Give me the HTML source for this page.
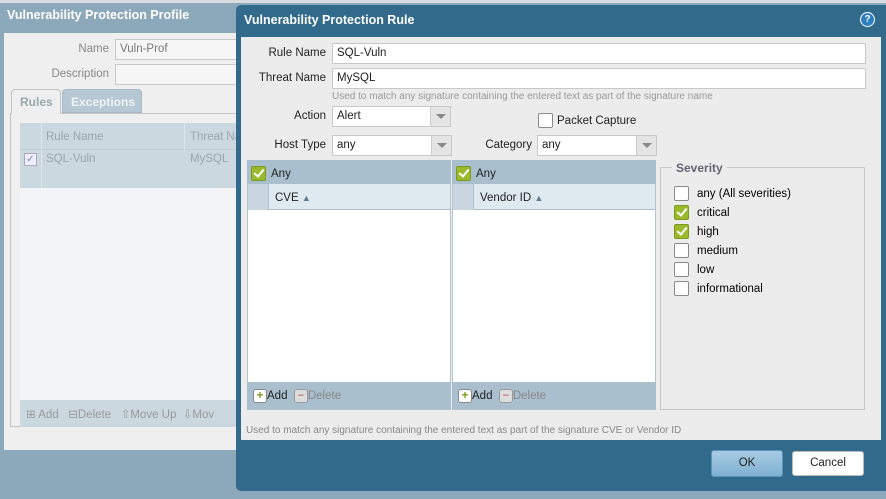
<!DOCTYPE html><html><head><style>
*{box-sizing:border-box;margin:0;padding:0}
body{width:886px;height:499px;overflow:hidden;background:#8ca8bb;font-family:"Liberation Sans","DejaVu Sans",sans-serif;font-size:11.5px;position:relative}
.a{position:absolute}
.inp{position:absolute;background:#fff;border:1px solid #c8c8c8;height:21px;padding:3px 4px;color:#222;font-size:11.5px}
.lbl{position:absolute;text-align:right;color:#222}
.cb{position:absolute;width:15px;height:15px;border:1px solid #8a8a8a;background:#fff;border-radius:2px}
.ck{background:#9ab92d;border-color:#7c9a1e}
.ck:after{content:"";position:absolute;left:4px;top:0px;width:4px;height:8px;border:solid #fff;border-width:0 2px 2px 0;transform:rotate(40deg)}
.sel .arr{position:absolute;right:0;top:0;width:20px;height:19px;background:#e4e4e4;border-left:1px solid #ccc}
.sel .arr:after{content:"";position:absolute;left:5px;top:7px;border:5px solid transparent;border-top:5px solid #888;border-bottom:0}
</style></head><body>
<div class="a" style="left:0;top:0;width:886px;height:3px;background:#d9dde0"></div>
<div class="a" style="left:7px;top:8px;color:#fff;font-weight:bold;font-size:12.5px">Vulnerability Protection Profile</div>
<div class="a" style="left:4px;top:33px;width:240px;height:417px;background:#efefef"></div>
<div class="lbl" style="left:40px;top:43px;width:69px;color:#888">Name</div>
<div class="inp" style="left:115px;top:39px;width:130px;color:#777;background:#f6f6f6">Vuln-Prof</div>
<div class="lbl" style="left:30px;top:68px;width:79px;color:#888">Description</div>
<div class="inp" style="left:115px;top:64px;width:130px;background:#f6f6f6"></div>
<div class="a" style="left:10px;top:113px;width:240px;height:314px;border:1px solid #c4c4c4"></div>
<div class="a" style="left:11px;top:89px;width:50px;height:25px;border:1px solid #c4c4c4;border-bottom:none;border-radius:4px 4px 0 0;background:#efefef;color:#9aa;font-weight:bold;padding:5px 8px;font-size:12px">Rules</div>
<div class="a" style="left:62px;top:89px;width:80px;height:24px;border:1px solid #a9b9c4;border-radius:4px 4px 0 0;background:#b6c8d4;color:#eef3f6;font-weight:bold;padding:5px 8px;font-size:12px">Exceptions</div>
<div class="a" style="left:20px;top:123px;width:230px;height:65px;background:#cbd8e0"></div>
<div class="a" style="left:20px;top:123px;width:230px;height:27px;border-bottom:1px solid #bfcdd6"></div>
<div class="a" style="left:41px;top:123px;width:1px;height:65px;background:#dde6ec"></div>
<div class="a" style="left:184px;top:123px;width:1px;height:27px;background:#dde6ec"></div>
<div class="a" style="left:46px;top:131px;color:#9aa6ae">Rule Name</div>
<div class="a" style="left:190px;top:131px;color:#9aa6ae">Threat Na</div>
<div class="a" style="left:24px;top:153px;width:13px;height:13px;border:1px solid #aab;background:#eef;color:#88a;font-size:10px;line-height:11px;text-align:center">✓</div>
<div class="a" style="left:46px;top:153px;color:#9aa6ae">SQL-Vuln</div>
<div class="a" style="left:190px;top:153px;color:#9aa6ae">MySQL</div>
<div class="a" style="left:20px;top:188px;width:230px;height:212px;background:#f3f4f5"></div>
<div class="a" style="left:20px;top:400px;width:230px;height:27px;background:#cbd8e0"></div>
<div class="a" style="left:26px;top:407px;color:#999">⊞ Add &nbsp; ⊟Delete &nbsp; ⇧Move Up &nbsp;⇩Mov</div>
<div class="a" style="left:236px;top:5px;width:660px;height:486px;background:#316a8a;border-radius:5px"></div>
<div class="a" style="left:244px;top:13px;color:#fff;font-weight:bold;font-size:12.5px">Vulnerability Protection Rule</div>
<div class="a" style="left:860px;top:12px;width:15px;height:15px;border-radius:50%;background:#2e7fc0;border:1px solid #fff;color:#fff;font-size:10px;font-weight:bold;text-align:center;line-height:13px">?</div>
<div class="a" style="left:241px;top:37px;width:640px;height:403px;background:#ececec"></div>
<div class="lbl" style="left:250px;top:47px;width:76px">Rule Name</div>
<div class="inp" style="left:332px;top:43px;width:534px">SQL-Vuln</div>
<div class="lbl" style="left:250px;top:72px;width:76px">Threat Name</div>
<div class="inp" style="left:332px;top:68px;width:534px">MySQL</div>
<div class="a" style="left:332px;top:91px;color:#999;font-size:10px">Used to match any signature containing the entered text as part of the signature name</div>
<div class="lbl" style="left:270px;top:110px;width:56px">Action</div>
<div class="inp sel" style="left:332px;top:106px;width:119px">Alert<div class="arr"></div></div>
<div class="cb" style="left:538px;top:113px"></div>
<div class="a" style="left:557px;top:115px;color:#222">Packet Capture</div>
<div class="lbl" style="left:260px;top:139px;width:66px">Host Type</div>
<div class="inp sel" style="left:332px;top:135px;width:120px">any<div class="arr"></div></div>
<div class="lbl" style="left:470px;top:139px;width:62px">Category</div>
<div class="inp sel" style="left:537px;top:135px;width:120px">any<div class="arr"></div></div>
<div class="a" style="left:247px;top:160px;width:204px;height:250px;background:#fff;border:1px solid #b4c4cf"></div>
<div class="a" style="left:247px;top:160px;width:204px;height:24px;background:#a9bfcd"></div>
<div class="cb ck" style="left:251px;top:166px"></div>
<div class="a" style="left:271px;top:168px;color:#222">Any</div>
<div class="a" style="left:248px;top:184px;width:202px;height:26px;background:#dfe9f0;border-bottom:1px solid #aebfcc"></div>
<div class="a" style="left:248px;top:184px;width:21px;height:26px;background:#c9d6df;border-right:1px solid #aebfcc"></div>
<div class="a" style="left:275px;top:192px;color:#222">CVE <span style="color:#5a7a90;font-size:9px">▲</span></div>
<div class="a" style="left:247px;top:382px;width:204px;height:27px;background:#aabfcd"></div>
<div class="a" style="left:253px;top:389px;color:#222"><span style="display:inline-block;width:14px;height:14px;border:1px solid #888;border-radius:3px;background:#fff;color:#7a9a1e;font-weight:bold;text-align:center;line-height:12px">+</span>Add &nbsp;<span style="color:#888"><span style="display:inline-block;width:14px;height:14px;border:1px solid #999;border-radius:3px;background:#ddd;color:#a55;text-align:center;line-height:12px">−</span>Delete</span></div>
<div class="a" style="left:452px;top:160px;width:204px;height:250px;background:#fff;border:1px solid #b4c4cf"></div>
<div class="a" style="left:452px;top:160px;width:204px;height:24px;background:#a9bfcd"></div>
<div class="cb ck" style="left:456px;top:166px"></div>
<div class="a" style="left:476px;top:168px;color:#222">Any</div>
<div class="a" style="left:453px;top:184px;width:202px;height:26px;background:#dfe9f0;border-bottom:1px solid #aebfcc"></div>
<div class="a" style="left:453px;top:184px;width:21px;height:26px;background:#c9d6df;border-right:1px solid #aebfcc"></div>
<div class="a" style="left:480px;top:192px;color:#222">Vendor ID <span style="color:#5a7a90;font-size:9px">▲</span></div>
<div class="a" style="left:452px;top:382px;width:204px;height:27px;background:#aabfcd"></div>
<div class="a" style="left:458px;top:389px;color:#222"><span style="display:inline-block;width:14px;height:14px;border:1px solid #888;border-radius:3px;background:#fff;color:#7a9a1e;font-weight:bold;text-align:center;line-height:12px">+</span>Add &nbsp;<span style="color:#888"><span style="display:inline-block;width:14px;height:14px;border:1px solid #999;border-radius:3px;background:#ddd;color:#a55;text-align:center;line-height:12px">−</span>Delete</span></div>
<div class="a" style="left:660px;top:167px;width:205px;height:243px;border:1px solid #c8c8c8"></div>
<div class="a" style="left:672px;top:161px;padding:0 4px;background:#ececec;color:#667;font-weight:bold;font-size:12px">Severity</div>
<div class="cb" style="left:674px;top:186px"></div><div class="a" style="left:697px;top:188px">any (All severities)</div>
<div class="cb ck" style="left:674px;top:205px"></div><div class="a" style="left:697px;top:207px">critical</div>
<div class="cb ck" style="left:674px;top:224px"></div><div class="a" style="left:697px;top:226px">high</div>
<div class="cb" style="left:674px;top:243px"></div><div class="a" style="left:697px;top:245px">medium</div>
<div class="cb" style="left:674px;top:262px"></div><div class="a" style="left:697px;top:264px">low</div>
<div class="cb" style="left:674px;top:281px"></div><div class="a" style="left:697px;top:283px">informational</div>
<div class="a" style="left:246px;top:425px;color:#888;font-size:10px">Used to match any signature containing the entered text as part of the signature CVE or Vendor ID</div>
<div class="a" style="left:711px;top:450px;width:72px;height:27px;border:1px solid #5c93b8;border-radius:3px;background:linear-gradient(#a8cbe3,#7fb0d2);text-align:center;line-height:25px;color:#222">OK</div>
<div class="a" style="left:792px;top:451px;width:72px;height:25px;border:1px solid #bbb;border-radius:3px;background:#fff;text-align:center;line-height:23px;color:#222">Cancel</div>
</body></html>
